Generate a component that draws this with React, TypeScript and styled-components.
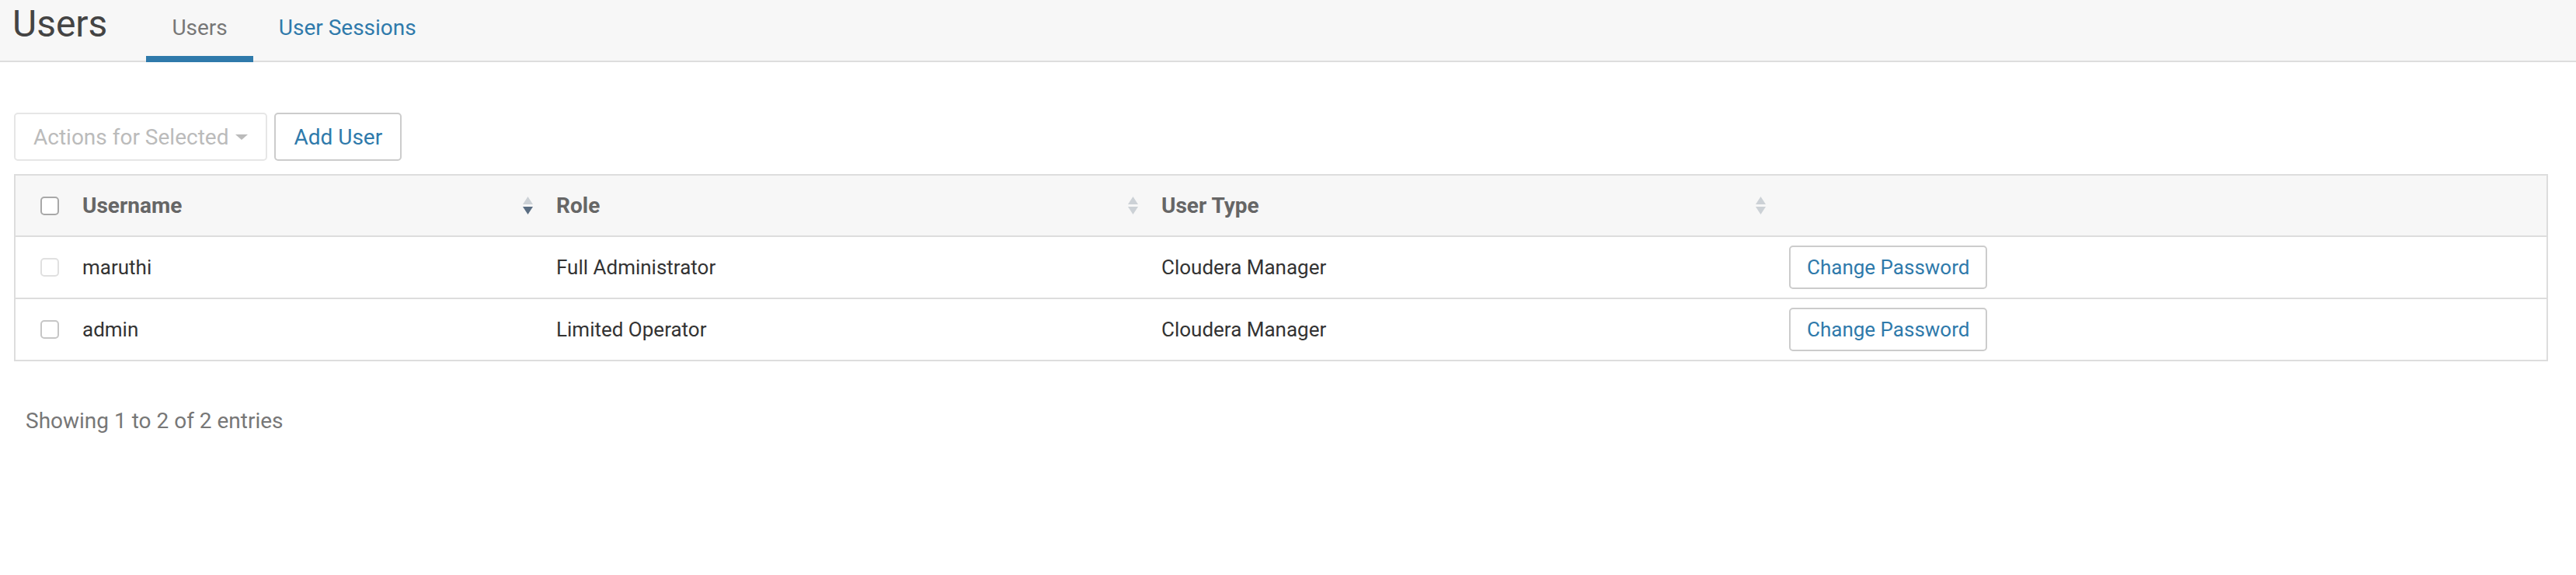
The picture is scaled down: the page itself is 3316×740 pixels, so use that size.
import React from "react";
import styled, { createGlobalStyle } from "styled-components";

const GlobalStyle = createGlobalStyle`
  html, body { margin: 0; padding: 0; background: #ffffff; }
  body { font-family: Roboto, "Liberation Sans", Arial, sans-serif; color: #333; }
  * { box-sizing: border-box; }
`;

const BLUE = "#2f7aab";

const PageHeader = styled.header`
  display: flex;
  align-items: flex-start;
  height: 80px;
  padding-left: 16px;
  background: #f7f7f7;
  border-bottom: 2px solid #dddddd;
`;

const Title = styled.h1`
  margin: 3px 50px 0 0;
  font-size: 48px;
  line-height: 56px;
  font-weight: 400;
  color: #444;
`;

const Tabs = styled.nav`
  display: flex;
`;

const Tab = styled.a<{ $active?: boolean }>`
  display: block;
  height: 80px;
  padding: 20px 33px 0;
  font-size: 28px;
  line-height: 32px;
  color: ${(p) => (p.$active ? "#777" : BLUE)};
  border-bottom: 8px solid ${(p) => (p.$active ? BLUE : "transparent")};
  text-decoration: none;
  cursor: pointer;
`;

const Main = styled.main`
  padding: 0 36px 0 18px;
`;

const Toolbar = styled.div`
  display: flex;
  gap: 9px;
  margin-top: 65px;
`;

const Button = styled.button<{ $disabled?: boolean }>`
  display: inline-flex;
  align-items: center;
  height: 62px;
  padding: 0 23px;
  font-family: Roboto, "Liberation Sans", Arial, sans-serif;
  font-size: 28px;
  color: ${(p) => (p.$disabled ? "#bbbbbb" : BLUE)};
  background: #fff;
  border: 2px solid ${(p) => (p.$disabled ? "#e6e6e6" : "#cccccc")};
  border-radius: 5px;
  cursor: ${(p) => (p.$disabled ? "default" : "pointer")};
`;

const Caret = styled.span`
  display: inline-block;
  margin-left: 9px;
  width: 0;
  height: 0;
  border-left: 8px solid transparent;
  border-right: 8px solid transparent;
  border-top: 7px solid #bbbbbb;
`;

const Table = styled.div`
  margin-top: 17px;
  border: 2px solid #dddddd;
  display: grid;
  grid-template-columns: 70px 610px 779px 808px 1fr;
`;

const HeadCell = styled.div`
  display: flex;
  align-items: center;
  justify-content: space-between;
  height: 79px;
  padding: 0 14px 0 16px;
  background: #f7f7f7;
  border-bottom: 2px solid #dddddd;
  font-size: 28px;
  font-weight: 700;
  color: #666;
`;

const CheckCell = styled.div<{ $head?: boolean; $last?: boolean }>`
  display: flex;
  align-items: center;
  height: ${(p) => (p.$head ? 79 : p.$last ? 78 : 80)}px;
  padding-left: 32px;
  background: ${(p) => (p.$head ? "#f7f7f7" : "#fff")};
  border-bottom: ${(p) => (p.$last ? "none" : "2px solid #dddddd")};
`;

const Cell = styled.div<{ $last?: boolean }>`
  display: flex;
  align-items: center;
  height: ${(p) => (p.$last ? 78 : 80)}px;
  padding: 0 16px;
  font-size: 26px;
  color: #333;
  border-bottom: ${(p) => (p.$last ? "none" : "2px solid #dddddd")};
`;

const Checkbox = styled.span<{ $tone: string }>`
  display: inline-block;
  width: 24px;
  height: 24px;
  border: 2px solid ${(p) => p.$tone};
  border-radius: 5px;
  background: #fff;
`;

const SmallButton = styled.button`
  display: inline-flex;
  align-items: center;
  height: 56px;
  padding: 0 21px;
  font-family: Roboto, "Liberation Sans", Arial, sans-serif;
  font-size: 26px;
  color: ${BLUE};
  background: #fff;
  border: 2px solid #cccccc;
  border-radius: 5px;
  cursor: pointer;
`;

const Footer = styled.div`
  margin-top: 57px;
  padding-left: 15px;
  font-size: 28px;
  line-height: 40px;
  color: #777;
`;

const SortIcon: React.FC<{ active?: boolean }> = ({ active }) => (
  <svg width="13" height="23" viewBox="0 0 13 23">
    <polygon points="0,10 6.5,0 13,10" fill="#ccd1d6" />
    <polygon points="0,13 13,13 6.5,23" fill={active ? "#5a6d82" : "#ccd1d6"} />
  </svg>
);

const users = [
  { name: "maruthi", role: "Full Administrator", type: "Cloudera Manager", tone: "#e0e0e0" },
  { name: "admin", role: "Limited Operator", type: "Cloudera Manager", tone: "#c6c6c6" },
];

export default function App() {
  return (
    <>
      <GlobalStyle />
      <PageHeader>
        <Title>Users</Title>
        <Tabs>
          <Tab $active>Users</Tab>
          <Tab>User Sessions</Tab>
        </Tabs>
      </PageHeader>
      <Main>
        <Toolbar>
          <Button $disabled>
            Actions for Selected
            <Caret />
          </Button>
          <Button>Add User</Button>
        </Toolbar>
        <Table>
          <CheckCell $head>
            <Checkbox $tone="#a8a8a8" />
          </CheckCell>
          <HeadCell>
            Username
            <SortIcon active />
          </HeadCell>
          <HeadCell>
            Role
            <SortIcon />
          </HeadCell>
          <HeadCell>
            User Type
            <SortIcon />
          </HeadCell>
          <HeadCell />
          {users.map((u, i) => {
            const last = i === users.length - 1;
            return (
              <React.Fragment key={u.name}>
                <CheckCell $last={last}>
                  <Checkbox $tone={u.tone} />
                </CheckCell>
                <Cell $last={last}>{u.name}</Cell>
                <Cell $last={last}>{u.role}</Cell>
                <Cell $last={last}>{u.type}</Cell>
                <Cell $last={last}>
                  <SmallButton>Change Password</SmallButton>
                </Cell>
              </React.Fragment>
            );
          })}
        </Table>
        <Footer>Showing 1 to 2 of 2 entries</Footer>
      </Main>
    </>
  );
}
